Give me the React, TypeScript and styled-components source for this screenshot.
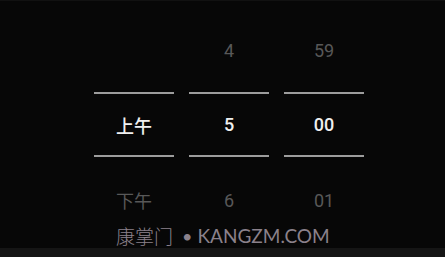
import React from "react";
import styled, { createGlobalStyle } from "styled-components";

const Global = createGlobalStyle`
  html, body { margin: 0; padding: 0; background: #070707; }
  body { font-family: Roboto, "Noto Sans CJK SC", sans-serif; }
`;

const Screen = styled.div`
  position: relative;
  width: 445px;
  height: 257px;
  background: #070707;
  display: flex;
  flex-direction: column;
  overflow: hidden;
  border-top: 1px solid #111;
  box-sizing: border-box;
`;

const Picker = styled.div`
  flex: 1;
  display: flex;
  gap: 15px;
  padding-left: 94px;
  padding-top: 29px;
`;

const Column = styled.div`
  width: 80px;
  display: flex;
  flex-direction: column;
`;

const Cell = styled.div<{ $active?: boolean }>`
  height: ${(p) => (p.$active ? 61 : 40)}px;
  display: flex;
  align-items: center;
  justify-content: center;
  font-family: Roboto, "Noto Sans CJK SC", sans-serif;
  font-size: 18px;
  font-weight: ${(p) => (p.$active ? 500 : 400)};
  color: ${(p) => (p.$active ? "#f0f0f0" : "#585858")};
`;

const Divider = styled.div<{ $gap: number }>`
  height: 2px;
  background: #9c9c9c;
  margin-top: ${(p) => p.$gap}px;
`;

const Spacer = styled.div<{ $h: number }>`
  height: ${(p) => p.$h}px;
`;

const Footer = styled.div`
  height: 9px;
  background: #151515;
`;

const Watermark = styled.div`
  position: absolute;
  left: 116px;
  top: 221px;
  display: flex;
  align-items: center;
  color: #8b818b;
  white-space: nowrap;
`;

const Brand = styled.span`
  font-family: "Noto Sans CJK SC", sans-serif;
  font-weight: 300;
  font-size: 19px;
`;

const Dot = styled.span`
  font-family: Lato, sans-serif;
  margin: 0 5px 0 9px;
  font-size: 18px;
`;

const Domain = styled.span`
  font-family: Lato, sans-serif;
  font-size: 19px;
`;

const columns = [
  { top: "", mid: "上午", bottom: "下午" },
  { top: "4", mid: "5", bottom: "6" },
  { top: "59", mid: "00", bottom: "01" },
];

export default function App() {
  return (
    <>
      <Global />
      <Screen>
        <Picker>
          {columns.map((c, i) => (
            <Column key={i}>
              <Cell>{c.top}</Cell>
              <Divider $gap={22} />
              <Cell $active>{c.mid}</Cell>
              <Divider $gap={0} />
              <Spacer $h={23} />
              <Cell>{c.bottom}</Cell>
            </Column>
          ))}
        </Picker>
        <Footer />
        <Watermark>
          <Brand>康掌门</Brand>
          <Dot>•</Dot>
          <Domain>KANGZM.COM</Domain>
        </Watermark>
      </Screen>
    </>
  );
}
